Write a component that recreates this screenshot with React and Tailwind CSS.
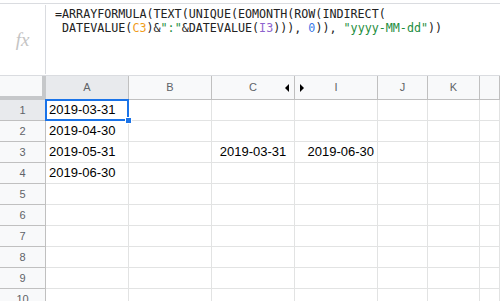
import React from "react";

const cols = ["A", "B", "C", "I", "J", "K", ""];

const data = {
  1: { A: "2019-03-31" },
  2: { A: "2019-04-30" },
  3: { A: "2019-05-31", C: "2019-03-31", I: "2019-06-30" },
  4: { A: "2019-06-30" },
};

function HeaderCell({ c }) {
  const selected = c === "A";
  return (
    <div
      className={
        "relative flex items-center justify-center border-r border-[#c0c0c0] text-[11px] text-[#5f6368] " +
        (selected ? "bg-[#e8eaed]" : "bg-[#f8f9fa]")
      }
    >
      {c}
      {c === "C" && (
        <span className="absolute right-[5px] top-[8px] h-0 w-0 border-y-[4px] border-r-[4px] border-y-transparent border-r-black" />
      )}
      {c === "I" && (
        <span className="absolute left-[5px] top-[8px] h-0 w-0 border-y-[4px] border-l-[4px] border-y-transparent border-l-black" />
      )}
    </div>
  );
}

function Cell({ row, c }) {
  const v = data[row]?.[c];
  let align = "justify-start pl-[3px]";
  if (c === "C") align = "justify-center";
  if (c === "I") align = "justify-end pr-[3px]";
  const sel = row === 1 && c === "A";
  return (
    <div
      className={
        "relative flex items-center border-r border-b border-[#e2e3e3] text-[13px] text-black " +
        align +
        (sel ? " z-10" : "")
      }
    >
      {v}
      {sel && (
        <>
          <span className="pointer-events-none absolute -left-px -top-px bottom-[-1px] right-[-1px] border-2 border-[#1a73e8]" />
          <span className="absolute right-[-4px] bottom-[-4px] h-[7px] w-[7px] border border-white bg-[#1a73e8]" />
        </>
      )}
    </div>
  );
}

export default function App() {
  return (
    <div
      className="h-[301px] w-[500px] overflow-hidden bg-white"
      style={{ fontFamily: '"Liberation Sans", Arial, sans-serif' }}
    >
      {/* formula bar */}
      <div className="mt-[3px] flex h-[73px] border-t border-b border-[#dadce0]">
        <div className="flex w-[45px] items-center justify-center pt-[2px]">
          <span
            className="text-[19px] italic text-[#c4c4c4]"
            style={{ fontFamily: '"Liberation Serif", "Times New Roman", serif' }}
          >
            fx
          </span>
        </div>
        <div className="my-[1px] w-px bg-[#dadce0]" />
        <div
          className="pl-[9px] pt-[4px] text-[11.7px] leading-[13.5px] text-[#222] whitespace-pre"
          style={{ fontFamily: '"DejaVu Sans Mono", "Liberation Mono", monospace' }}
        >
          <div>=ARRAYFORMULA(TEXT(UNIQUE(EOMONTH(ROW(INDIRECT(</div>
          <div>
            {" DATEVALUE("}
            <span className="text-[#f09d1b]">C3</span>
            {")&"}
            <span className="text-[#1e8e3e]">":"</span>
            {"&DATEVALUE("}
            <span className="text-[#8e63ce]">I3</span>
            {"))), "}
            <span className="text-[#3b78e7]">0</span>
            {")), "}
            <span className="text-[#1e8e3e]">"yyyy-MM-dd"</span>
            {"))"}
          </div>
        </div>
      </div>

      {/* grid */}
      <div className="grid grid-cols-[46px_83px_83px_83px_83px_50px_52px_1fr] grid-rows-[24px] auto-rows-[21px]">
        <div className="border-r-[4px] border-b-[4px] border-[#c6c8ca] bg-[#f8f9fa]" />
        {cols.map((c, i) => (
          <div key={i} className="grid border-b border-[#c0c0c0]">
            <HeaderCell c={c} />
          </div>
        ))}
        {[1, 2, 3, 4, 5, 6, 7, 8, 9, 10].map((r) => (
          <React.Fragment key={r}>
            <div
              className={
                "flex items-center justify-center border-r border-b border-r-[#c0c0c0] border-b-[#c0c0c0] text-[11px] text-[#5f6368] " +
                (r === 1 ? "bg-[#e8eaed]" : "bg-[#f8f9fa]")
              }
            >
              {r}
            </div>
            {cols.map((c, i) => (
              <Cell key={i} row={r} c={c} />
            ))}
          </React.Fragment>
        ))}
      </div>
    </div>
  );
}
